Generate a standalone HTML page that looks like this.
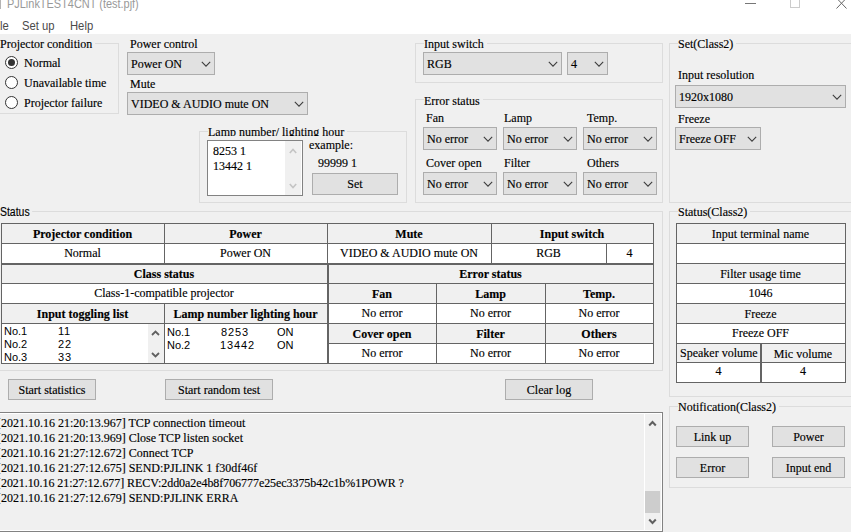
<!DOCTYPE html>
<html><head><meta charset="utf-8"><style>
html,body{margin:0;padding:0}
body{width:851px;height:532px;overflow:hidden;position:relative;background:#f0f0f0;font-family:"Liberation Serif",serif;font-size:12px;color:#000}
body div, body svg{position:absolute;box-sizing:border-box}
.t{white-space:pre;-webkit-text-stroke:0.15px currentColor}
.s{-webkit-text-stroke:0}
</style></head><body>
<div style="left:0px;top:0px;width:851px;height:34px;background:#fff"></div>
<div style="left:0px;top:0px;width:1px;height:9px;background:#b4b4b4"></div>
<div class="t s" style="left:7px;top:-2px;font-family:'Liberation Sans', sans-serif;font-size:12px;line-height:12px;font-weight:normal;color:#999;transform:scaleX(0.912);transform-origin:0 0">PJLinkTEST4CNT (test.pjf)</div>
<div style="left:745px;top:3px;width:11px;height:1px;background:#777"></div>
<div style="left:790px;top:-2px;width:10px;height:10px;border:1px solid #ccc"></div>
<svg style="left:836px;top:0px;overflow:visible" width="11" height="9" viewBox="0 0 11 9"><path d="M0.5,-2 L10.5,8.5 M10.5,-2 L0.5,8.5" stroke="#666" stroke-width="1" fill="none"/></svg>
<div class="t s" style="left:0px;top:20px;font-family:'Liberation Sans', sans-serif;font-size:12.5px;line-height:12.5px;font-weight:normal;color:#4a4a4a;transform:scaleX(0.9);transform-origin:0 0">le</div>
<div class="t s" style="left:22px;top:20px;font-family:'Liberation Sans', sans-serif;font-size:12.5px;line-height:12.5px;font-weight:normal;color:#4a4a4a;transform:scaleX(0.9);transform-origin:0 0">Set up</div>
<div class="t s" style="left:70px;top:20px;font-family:'Liberation Sans', sans-serif;font-size:12.5px;line-height:12.5px;font-weight:normal;color:#4a4a4a;transform:scaleX(0.9);transform-origin:0 0">Help</div>
<div style="left:-5px;top:43px;width:124px;height:71px;border:1px solid #dcdcdc"></div>
<div class="t" style="left:0px;top:38px;font-family:'Liberation Serif', serif;font-size:12px;line-height:12px;background:#f0f0f0;padding-right:3px;height:15px;overflow:hidden">Projector condition</div>
<svg style="left:5px;top:56px" width="13" height="13" viewBox="0 0 13 13"><circle cx="6.5" cy="6.5" r="6" fill="#fff" stroke="#333" stroke-width="1"/><circle cx="6.5" cy="6.5" r="3.5" fill="#333"/></svg>
<svg style="left:5px;top:76px" width="13" height="13" viewBox="0 0 13 13"><circle cx="6.5" cy="6.5" r="6" fill="#fff" stroke="#333" stroke-width="1"/></svg>
<svg style="left:5px;top:96px" width="13" height="13" viewBox="0 0 13 13"><circle cx="6.5" cy="6.5" r="6" fill="#fff" stroke="#333" stroke-width="1"/></svg>
<div class="t" style="left:24px;top:57px;font-family:'Liberation Serif', serif;font-size:12px;line-height:12px;font-weight:normal;color:#000;">Normal</div>
<div class="t" style="left:24px;top:77px;font-family:'Liberation Serif', serif;font-size:12px;line-height:12px;font-weight:normal;color:#000;">Unavailable time</div>
<div class="t" style="left:24px;top:97px;font-family:'Liberation Serif', serif;font-size:12px;line-height:12px;font-weight:normal;color:#000;">Projector failure</div>
<div class="t" style="left:130px;top:38px;font-family:'Liberation Serif', serif;font-size:12px;line-height:12px;font-weight:normal;color:#000;">Power control</div>
<div style="left:127px;top:52px;width:88px;height:23px;background:#e1e1e1;border:1px solid #adadad"></div>
<div class="t" style="left:131px;top:58px;font-family:'Liberation Serif', serif;font-size:12px;line-height:12px;font-weight:normal;color:#000;">Power ON</div>
<svg style="left:201px;top:61px" width="10" height="7"><polyline points="0.8,0.8 5,5.2 9.2,0.8" fill="none" stroke="#3c3c3c" stroke-width="1.05"/></svg>
<div class="t" style="left:130px;top:78px;font-family:'Liberation Serif', serif;font-size:12px;line-height:12px;font-weight:normal;color:#000;">Mute</div>
<div style="left:127px;top:92px;width:181px;height:23px;background:#e1e1e1;border:1px solid #adadad"></div>
<div class="t" style="left:131px;top:98px;font-family:'Liberation Serif', serif;font-size:12px;line-height:12px;font-weight:normal;color:#000;">VIDEO &amp; AUDIO mute ON</div>
<svg style="left:294px;top:101px" width="10" height="7"><polyline points="0.8,0.8 5,5.2 9.2,0.8" fill="none" stroke="#3c3c3c" stroke-width="1.05"/></svg>
<div style="left:199px;top:131px;width:208px;height:72px;border:1px solid #dcdcdc"></div>
<div class="t" style="left:208px;top:126px;font-family:'Liberation Serif', serif;font-size:12px;line-height:12px;background:#f0f0f0;padding-right:3px;height:10px;overflow:hidden">Lamp number/ lighting hour</div>
<div style="left:207px;top:140px;width:96px;height:56px;background:#fff;border:1px solid #828282"></div>
<div style="left:285px;top:141px;width:16px;height:54px;background:#f0f0f0"></div>
<svg style="left:289px;top:183px" width="8" height="6"><polyline points="0.8,1 4,4.5 7.2,1" fill="none" stroke="#c4c4c4" stroke-width="1.6"/></svg>
<svg style="left:289px;top:148px" width="8" height="6"><polyline points="0.8,5 4,1.5 7.2,5" fill="none" stroke="#c4c4c4" stroke-width="1.6"/></svg>
<div class="t" style="left:213px;top:145px;font-family:'Liberation Serif', serif;font-size:12px;line-height:12px;font-weight:normal;color:#000;">8253 1</div>
<div class="t" style="left:213px;top:160px;font-family:'Liberation Serif', serif;font-size:12px;line-height:12px;font-weight:normal;color:#000;">13442 1</div>
<div class="t" style="left:309px;top:139px;font-family:'Liberation Serif', serif;font-size:12px;line-height:12px;font-weight:normal;color:#000;">example:</div>
<div class="t" style="left:318px;top:157px;font-family:'Liberation Serif', serif;font-size:12px;line-height:12px;font-weight:normal;color:#000;">99999 1</div>
<div style="left:312px;top:173px;width:86px;height:22px;background:#e1e1e1;border:1px solid #adadad"></div>
<div class="t" style="left:312px;top:178px;width:86px;text-align:center;font-family:'Liberation Serif', serif;font-size:12px;line-height:12px;font-weight:normal;color:#000;">Set</div>
<div style="left:415px;top:43px;width:248px;height:40px;border:1px solid #dcdcdc"></div>
<div class="t" style="left:424px;top:38px;font-family:'Liberation Serif', serif;font-size:12px;line-height:12px;background:#f0f0f0;padding-right:3px;height:15px;overflow:hidden">Input switch</div>
<div style="left:423px;top:52px;width:139px;height:23px;background:#e1e1e1;border:1px solid #adadad"></div>
<div class="t" style="left:427px;top:58px;font-family:'Liberation Serif', serif;font-size:12px;line-height:12px;font-weight:normal;color:#000;">RGB</div>
<svg style="left:548px;top:61px" width="10" height="7"><polyline points="0.8,0.8 5,5.2 9.2,0.8" fill="none" stroke="#3c3c3c" stroke-width="1.05"/></svg>
<div style="left:567px;top:52px;width:41px;height:23px;background:#e1e1e1;border:1px solid #adadad"></div>
<div class="t" style="left:571px;top:58px;font-family:'Liberation Serif', serif;font-size:12px;line-height:12px;font-weight:normal;color:#000;">4</div>
<svg style="left:594px;top:61px" width="10" height="7"><polyline points="0.8,0.8 5,5.2 9.2,0.8" fill="none" stroke="#3c3c3c" stroke-width="1.05"/></svg>
<div style="left:415px;top:99px;width:248px;height:104px;border:1px solid #dcdcdc"></div>
<div class="t" style="left:424px;top:95px;font-family:'Liberation Serif', serif;font-size:12px;line-height:12px;background:#f0f0f0;padding-right:3px;height:15px;overflow:hidden">Error status</div>
<div class="t" style="left:426px;top:112px;font-family:'Liberation Serif', serif;font-size:12px;line-height:12px;font-weight:normal;color:#000;">Fan</div>
<div style="left:423px;top:127px;width:74px;height:23px;background:#e1e1e1;border:1px solid #adadad"></div>
<div class="t" style="left:427px;top:133px;font-family:'Liberation Serif', serif;font-size:12px;line-height:12px;font-weight:normal;color:#000;">No error</div>
<svg style="left:483px;top:136px" width="10" height="7"><polyline points="0.8,0.8 5,5.2 9.2,0.8" fill="none" stroke="#3c3c3c" stroke-width="1.05"/></svg>
<div class="t" style="left:504px;top:112px;font-family:'Liberation Serif', serif;font-size:12px;line-height:12px;font-weight:normal;color:#000;">Lamp</div>
<div style="left:503px;top:127px;width:74px;height:23px;background:#e1e1e1;border:1px solid #adadad"></div>
<div class="t" style="left:507px;top:133px;font-family:'Liberation Serif', serif;font-size:12px;line-height:12px;font-weight:normal;color:#000;">No error</div>
<svg style="left:563px;top:136px" width="10" height="7"><polyline points="0.8,0.8 5,5.2 9.2,0.8" fill="none" stroke="#3c3c3c" stroke-width="1.05"/></svg>
<div class="t" style="left:587px;top:112px;font-family:'Liberation Serif', serif;font-size:12px;line-height:12px;font-weight:normal;color:#000;">Temp.</div>
<div style="left:583px;top:127px;width:74px;height:23px;background:#e1e1e1;border:1px solid #adadad"></div>
<div class="t" style="left:587px;top:133px;font-family:'Liberation Serif', serif;font-size:12px;line-height:12px;font-weight:normal;color:#000;">No error</div>
<svg style="left:643px;top:136px" width="10" height="7"><polyline points="0.8,0.8 5,5.2 9.2,0.8" fill="none" stroke="#3c3c3c" stroke-width="1.05"/></svg>
<div class="t" style="left:426px;top:157px;font-family:'Liberation Serif', serif;font-size:12px;line-height:12px;font-weight:normal;color:#000;">Cover open</div>
<div style="left:423px;top:172px;width:74px;height:23px;background:#e1e1e1;border:1px solid #adadad"></div>
<div class="t" style="left:427px;top:178px;font-family:'Liberation Serif', serif;font-size:12px;line-height:12px;font-weight:normal;color:#000;">No error</div>
<svg style="left:483px;top:181px" width="10" height="7"><polyline points="0.8,0.8 5,5.2 9.2,0.8" fill="none" stroke="#3c3c3c" stroke-width="1.05"/></svg>
<div class="t" style="left:504px;top:157px;font-family:'Liberation Serif', serif;font-size:12px;line-height:12px;font-weight:normal;color:#000;">Filter</div>
<div style="left:503px;top:172px;width:74px;height:23px;background:#e1e1e1;border:1px solid #adadad"></div>
<div class="t" style="left:507px;top:178px;font-family:'Liberation Serif', serif;font-size:12px;line-height:12px;font-weight:normal;color:#000;">No error</div>
<svg style="left:563px;top:181px" width="10" height="7"><polyline points="0.8,0.8 5,5.2 9.2,0.8" fill="none" stroke="#3c3c3c" stroke-width="1.05"/></svg>
<div class="t" style="left:587px;top:157px;font-family:'Liberation Serif', serif;font-size:12px;line-height:12px;font-weight:normal;color:#000;">Others</div>
<div style="left:583px;top:172px;width:74px;height:23px;background:#e1e1e1;border:1px solid #adadad"></div>
<div class="t" style="left:587px;top:178px;font-family:'Liberation Serif', serif;font-size:12px;line-height:12px;font-weight:normal;color:#000;">No error</div>
<svg style="left:643px;top:181px" width="10" height="7"><polyline points="0.8,0.8 5,5.2 9.2,0.8" fill="none" stroke="#3c3c3c" stroke-width="1.05"/></svg>
<div style="left:669px;top:43px;width:192px;height:160px;border:1px solid #dcdcdc"></div>
<div class="t" style="left:678px;top:38px;font-family:'Liberation Serif', serif;font-size:12px;line-height:12px;background:#f0f0f0;padding-right:3px;height:15px;overflow:hidden">Set(Class2)</div>
<div class="t" style="left:678px;top:69px;font-family:'Liberation Serif', serif;font-size:12px;line-height:12px;font-weight:normal;color:#000;">Input resolution</div>
<div style="left:675px;top:85px;width:171px;height:23px;background:#e1e1e1;border:1px solid #adadad"></div>
<div class="t" style="left:679px;top:91px;font-family:'Liberation Serif', serif;font-size:12px;line-height:12px;font-weight:normal;color:#000;">1920x1080</div>
<svg style="left:832px;top:94px" width="10" height="7"><polyline points="0.8,0.8 5,5.2 9.2,0.8" fill="none" stroke="#3c3c3c" stroke-width="1.05"/></svg>
<div class="t" style="left:678px;top:113px;font-family:'Liberation Serif', serif;font-size:12px;line-height:12px;font-weight:normal;color:#000;">Freeze</div>
<div style="left:675px;top:127px;width:86px;height:23px;background:#e1e1e1;border:1px solid #adadad"></div>
<div class="t" style="left:679px;top:133px;font-family:'Liberation Serif', serif;font-size:12px;line-height:12px;font-weight:normal;color:#000;">Freeze OFF</div>
<svg style="left:747px;top:136px" width="10" height="7"><polyline points="0.8,0.8 5,5.2 9.2,0.8" fill="none" stroke="#3c3c3c" stroke-width="1.05"/></svg>
<div style="left:-5px;top:211px;width:668px;height:160px;border:1px solid #dcdcdc"></div>
<div class="t" style="left:0px;top:206px;font-family:'Liberation Sans', sans-serif;font-size:12px;line-height:12px;background:#f0f0f0;padding-right:3px;height:13px;transform:scaleX(0.87);transform-origin:0 0">Status</div>
<div style="left:1px;top:223px;width:164px;height:21px;background:#f0f0f0;border:1px solid #646464"></div>
<div style="left:164px;top:223px;width:164px;height:21px;background:#f0f0f0;border:1px solid #646464"></div>
<div style="left:327px;top:223px;width:165px;height:21px;background:#f0f0f0;border:1px solid #646464"></div>
<div style="left:491px;top:223px;width:163px;height:21px;background:#f0f0f0;border:1px solid #646464"></div>
<div style="left:1px;top:243px;width:164px;height:21px;background:#fff;border:1px solid #646464"></div>
<div style="left:164px;top:243px;width:164px;height:21px;background:#fff;border:1px solid #646464"></div>
<div style="left:327px;top:243px;width:165px;height:21px;background:#fff;border:1px solid #646464"></div>
<div style="left:491px;top:243px;width:116px;height:21px;background:#fff;border:1px solid #646464"></div>
<div style="left:606px;top:243px;width:48px;height:21px;background:#fff;border:1px solid #646464"></div>
<div class="t" style="left:1px;top:228px;width:163px;text-align:center;font-family:'Liberation Serif', serif;font-size:12px;line-height:12px;font-weight:bold;color:#000;">Projector condition</div>
<div class="t" style="left:164px;top:228px;width:163px;text-align:center;font-family:'Liberation Serif', serif;font-size:12px;line-height:12px;font-weight:bold;color:#000;">Power</div>
<div class="t" style="left:327px;top:228px;width:164px;text-align:center;font-family:'Liberation Serif', serif;font-size:12px;line-height:12px;font-weight:bold;color:#000;">Mute</div>
<div class="t" style="left:491px;top:228px;width:162px;text-align:center;font-family:'Liberation Serif', serif;font-size:12px;line-height:12px;font-weight:bold;color:#000;">Input switch</div>
<div class="t" style="left:1px;top:247px;width:163px;text-align:center;font-family:'Liberation Serif', serif;font-size:12px;line-height:12px;font-weight:normal;color:#000;">Normal</div>
<div class="t" style="left:164px;top:247px;width:163px;text-align:center;font-family:'Liberation Serif', serif;font-size:12px;line-height:12px;font-weight:normal;color:#000;">Power ON</div>
<div class="t" style="left:327px;top:247px;width:164px;text-align:center;font-family:'Liberation Serif', serif;font-size:12px;line-height:12px;font-weight:normal;color:#000;">VIDEO &amp; AUDIO mute ON</div>
<div class="t" style="left:491px;top:247px;width:115px;text-align:center;font-family:'Liberation Serif', serif;font-size:12px;line-height:12px;font-weight:normal;color:#000;">RGB</div>
<div class="t" style="left:606px;top:247px;width:47px;text-align:center;font-family:'Liberation Serif', serif;font-size:12px;line-height:12px;font-weight:normal;color:#000;">4</div>
<div style="left:1px;top:264px;width:327px;height:20px;background:#f0f0f0;border:1px solid #646464"></div>
<div class="t" style="left:1px;top:268px;width:326px;text-align:center;font-family:'Liberation Serif', serif;font-size:12px;line-height:12px;font-weight:bold;color:#000;">Class status</div>
<div style="left:1px;top:283px;width:327px;height:21px;background:#fff;border:1px solid #646464"></div>
<div class="t" style="left:1px;top:287px;width:326px;text-align:center;font-family:'Liberation Serif', serif;font-size:12px;line-height:12px;font-weight:normal;color:#000;">Class-1-compatible projector</div>
<div style="left:1px;top:303px;width:164px;height:21px;background:#f0f0f0;border:1px solid #646464"></div>
<div style="left:164px;top:303px;width:164px;height:21px;background:#f0f0f0;border:1px solid #646464"></div>
<div class="t" style="left:1px;top:308px;width:163px;text-align:center;font-family:'Liberation Serif', serif;font-size:12px;line-height:12px;font-weight:bold;color:#000;">Input toggling list</div>
<div class="t" style="left:164px;top:308px;width:163px;text-align:center;font-family:'Liberation Serif', serif;font-size:12px;line-height:12px;font-weight:bold;color:#000;">Lamp number lighting hour</div>
<div style="left:1px;top:323px;width:164px;height:41px;background:#fff;border:1px solid #646464"></div>
<div style="left:164px;top:323px;width:164px;height:41px;background:#fff;border:1px solid #646464"></div>
<div style="left:2px;top:324px;width:162px;height:39px;overflow:hidden">
<div class="t s" style="left:2px;top:2px;font-family:'Liberation Sans', sans-serif;font-size:11px;line-height:11px">No.1</div>
<div class="t s" style="left:56px;top:2px;font-family:'Liberation Sans', sans-serif;font-size:11px;line-height:11px;letter-spacing:0.8px">11</div>
<div class="t s" style="left:2px;top:15px;font-family:'Liberation Sans', sans-serif;font-size:11px;line-height:11px">No.2</div>
<div class="t s" style="left:56px;top:15px;font-family:'Liberation Sans', sans-serif;font-size:11px;line-height:11px;letter-spacing:0.8px">22</div>
<div class="t s" style="left:2px;top:28px;font-family:'Liberation Sans', sans-serif;font-size:11px;line-height:11px">No.3</div>
<div class="t s" style="left:56px;top:28px;font-family:'Liberation Sans', sans-serif;font-size:11px;line-height:11px;letter-spacing:0.8px">33</div>
</div>
<div style="left:148px;top:324px;width:16px;height:39px;background:#f0f0f0"></div>
<svg style="left:151px;top:330px" width="9" height="6"><polyline points="1,5 4.5,1.5 8,5" fill="none" stroke="#606060" stroke-width="1.8"/></svg>
<svg style="left:151px;top:352px" width="9" height="6"><polyline points="1,1 4.5,4.5 8,1" fill="none" stroke="#606060" stroke-width="1.8"/></svg>
<div class="t s" style="left:167px;top:327px;font-family:'Liberation Sans', sans-serif;font-size:11px;line-height:11px;font-weight:normal;color:#000;">No.1</div>
<div class="t s" style="left:221px;top:327px;font-family:'Liberation Sans', sans-serif;font-size:11px;line-height:11px;font-weight:normal;color:#000;letter-spacing:0.9px">8253</div>
<div class="t s" style="left:277px;top:327px;font-family:'Liberation Sans', sans-serif;font-size:11px;line-height:11px;font-weight:normal;color:#000;">ON</div>
<div class="t s" style="left:167px;top:340px;font-family:'Liberation Sans', sans-serif;font-size:11px;line-height:11px;font-weight:normal;color:#000;">No.2</div>
<div class="t s" style="left:220px;top:340px;font-family:'Liberation Sans', sans-serif;font-size:11px;line-height:11px;font-weight:normal;color:#000;letter-spacing:0.9px">13442</div>
<div class="t s" style="left:277px;top:340px;font-family:'Liberation Sans', sans-serif;font-size:11px;line-height:11px;font-weight:normal;color:#000;">ON</div>
<div style="left:328px;top:264px;width:326px;height:20px;background:#f0f0f0;border:1px solid #646464"></div>
<div class="t" style="left:328px;top:268px;width:325px;text-align:center;font-family:'Liberation Serif', serif;font-size:12px;line-height:12px;font-weight:bold;color:#000;">Error status</div>
<div style="left:328px;top:283px;width:109px;height:21px;background:#f0f0f0;border:1px solid #646464"></div>
<div style="left:328px;top:303px;width:109px;height:21px;background:#fff;border:1px solid #646464"></div>
<div style="left:328px;top:323px;width:109px;height:21px;background:#f0f0f0;border:1px solid #646464"></div>
<div style="left:328px;top:343px;width:109px;height:21px;background:#fff;border:1px solid #646464"></div>
<div style="left:436px;top:283px;width:110px;height:21px;background:#f0f0f0;border:1px solid #646464"></div>
<div style="left:436px;top:303px;width:110px;height:21px;background:#fff;border:1px solid #646464"></div>
<div style="left:436px;top:323px;width:110px;height:21px;background:#f0f0f0;border:1px solid #646464"></div>
<div style="left:436px;top:343px;width:110px;height:21px;background:#fff;border:1px solid #646464"></div>
<div style="left:545px;top:283px;width:109px;height:21px;background:#f0f0f0;border:1px solid #646464"></div>
<div style="left:545px;top:303px;width:109px;height:21px;background:#fff;border:1px solid #646464"></div>
<div style="left:545px;top:323px;width:109px;height:21px;background:#f0f0f0;border:1px solid #646464"></div>
<div style="left:545px;top:343px;width:109px;height:21px;background:#fff;border:1px solid #646464"></div>
<div class="t" style="left:328px;top:288px;width:108px;text-align:center;font-family:'Liberation Serif', serif;font-size:12px;line-height:12px;font-weight:bold;color:#000;">Fan</div>
<div class="t" style="left:328px;top:307px;width:108px;text-align:center;font-family:'Liberation Serif', serif;font-size:12px;line-height:12px;font-weight:normal;color:#000;">No error</div>
<div class="t" style="left:436px;top:288px;width:109px;text-align:center;font-family:'Liberation Serif', serif;font-size:12px;line-height:12px;font-weight:bold;color:#000;">Lamp</div>
<div class="t" style="left:436px;top:307px;width:109px;text-align:center;font-family:'Liberation Serif', serif;font-size:12px;line-height:12px;font-weight:normal;color:#000;">No error</div>
<div class="t" style="left:545px;top:288px;width:108px;text-align:center;font-family:'Liberation Serif', serif;font-size:12px;line-height:12px;font-weight:bold;color:#000;">Temp.</div>
<div class="t" style="left:545px;top:307px;width:108px;text-align:center;font-family:'Liberation Serif', serif;font-size:12px;line-height:12px;font-weight:normal;color:#000;">No error</div>
<div class="t" style="left:328px;top:328px;width:108px;text-align:center;font-family:'Liberation Serif', serif;font-size:12px;line-height:12px;font-weight:bold;color:#000;">Cover open</div>
<div class="t" style="left:328px;top:347px;width:108px;text-align:center;font-family:'Liberation Serif', serif;font-size:12px;line-height:12px;font-weight:normal;color:#000;">No error</div>
<div class="t" style="left:436px;top:328px;width:109px;text-align:center;font-family:'Liberation Serif', serif;font-size:12px;line-height:12px;font-weight:bold;color:#000;">Filter</div>
<div class="t" style="left:436px;top:347px;width:109px;text-align:center;font-family:'Liberation Serif', serif;font-size:12px;line-height:12px;font-weight:normal;color:#000;">No error</div>
<div class="t" style="left:545px;top:328px;width:108px;text-align:center;font-family:'Liberation Serif', serif;font-size:12px;line-height:12px;font-weight:bold;color:#000;">Others</div>
<div class="t" style="left:545px;top:347px;width:108px;text-align:center;font-family:'Liberation Serif', serif;font-size:12px;line-height:12px;font-weight:normal;color:#000;">No error</div>
<div style="left:669px;top:211px;width:192px;height:186px;border:1px solid #dcdcdc"></div>
<div class="t" style="left:678px;top:206px;font-family:'Liberation Serif', serif;font-size:12px;line-height:12px;background:#f0f0f0;padding-right:3px;height:15px;overflow:hidden">Status(Class2)</div>
<div style="left:676px;top:223px;width:170px;height:21px;background:#f0f0f0;border:1px solid #646464"></div>
<div class="t" style="left:676px;top:228px;width:169px;text-align:center;font-family:'Liberation Serif', serif;font-size:12px;line-height:12px;font-weight:normal;color:#000;">Input terminal name</div>
<div style="left:676px;top:243px;width:170px;height:21px;background:#fff;border:1px solid #646464"></div>
<div style="left:676px;top:263px;width:170px;height:21px;background:#f0f0f0;border:1px solid #646464"></div>
<div class="t" style="left:676px;top:268px;width:169px;text-align:center;font-family:'Liberation Serif', serif;font-size:12px;line-height:12px;font-weight:normal;color:#000;">Filter usage time</div>
<div style="left:676px;top:283px;width:170px;height:21px;background:#fff;border:1px solid #646464"></div>
<div class="t" style="left:676px;top:287px;width:169px;text-align:center;font-family:'Liberation Serif', serif;font-size:12px;line-height:12px;font-weight:normal;color:#000;">1046</div>
<div style="left:676px;top:303px;width:170px;height:21px;background:#f0f0f0;border:1px solid #646464"></div>
<div class="t" style="left:676px;top:308px;width:169px;text-align:center;font-family:'Liberation Serif', serif;font-size:12px;line-height:12px;font-weight:normal;color:#000;">Freeze</div>
<div style="left:676px;top:323px;width:170px;height:21px;background:#fff;border:1px solid #646464"></div>
<div class="t" style="left:676px;top:327px;width:169px;text-align:center;font-family:'Liberation Serif', serif;font-size:12px;line-height:12px;font-weight:normal;color:#000;">Freeze OFF</div>
<div style="left:676px;top:343px;width:85px;height:20px;background:#f0f0f0;border:1px solid #646464"></div>
<div style="left:761px;top:343px;width:85px;height:20px;background:#f0f0f0;border:1px solid #646464"></div>
<div class="t" style="left:680px;top:347px;font-family:'Liberation Serif', serif;font-size:12px;line-height:12px;font-weight:normal;color:#000;">Speaker volume</div>
<div class="t" style="left:761px;top:348px;width:84px;text-align:center;font-family:'Liberation Serif', serif;font-size:12px;line-height:12px;font-weight:normal;color:#000;">Mic volume</div>
<div style="left:676px;top:362px;width:85px;height:21px;background:#fff;border:1px solid #646464"></div>
<div style="left:761px;top:362px;width:85px;height:21px;background:#fff;border:1px solid #646464"></div>
<div class="t" style="left:676px;top:365px;width:85px;text-align:center;font-family:'Liberation Serif', serif;font-size:12px;line-height:12px;font-weight:normal;color:#000;">4</div>
<div class="t" style="left:761px;top:365px;width:84px;text-align:center;font-family:'Liberation Serif', serif;font-size:12px;line-height:12px;font-weight:normal;color:#000;">4</div>
<div style="left:8px;top:379px;width:88px;height:21px;background:#e1e1e1;border:1px solid #adadad"></div>
<div class="t" style="left:8px;top:384px;width:88px;text-align:center;font-family:'Liberation Serif', serif;font-size:12px;line-height:12px;font-weight:normal;color:#000;">Start statistics</div>
<div style="left:165px;top:379px;width:108px;height:21px;background:#e1e1e1;border:1px solid #adadad"></div>
<div class="t" style="left:165px;top:384px;width:108px;text-align:center;font-family:'Liberation Serif', serif;font-size:12px;line-height:12px;font-weight:normal;color:#000;">Start random test</div>
<div style="left:505px;top:379px;width:88px;height:21px;background:#e1e1e1;border:1px solid #adadad"></div>
<div class="t" style="left:505px;top:384px;width:88px;text-align:center;font-family:'Liberation Serif', serif;font-size:12px;line-height:12px;font-weight:normal;color:#000;">Clear log</div>
<div style="left:-1px;top:412px;width:664px;height:120px;background:#f0f0f0;border:1px solid #828282"></div>
<div style="left:0px;top:413px;width:662px;height:118px;border:1px solid #fff;border-left:0"></div>
<div class="t" style="left:-3px;top:417px;font-family:'Liberation Serif', serif;font-size:12px;line-height:12px;font-weight:normal;color:#000;">[2021.10.16 21:20:13.967] TCP connection timeout</div>
<div class="t" style="left:-3px;top:432px;font-family:'Liberation Serif', serif;font-size:12px;line-height:12px;font-weight:normal;color:#000;">[2021.10.16 21:20:13.969] Close TCP listen socket</div>
<div class="t" style="left:-3px;top:447px;font-family:'Liberation Serif', serif;font-size:12px;line-height:12px;font-weight:normal;color:#000;">[2021.10.16 21:27:12.672] Connect TCP</div>
<div class="t" style="left:-3px;top:462px;font-family:'Liberation Serif', serif;font-size:12px;line-height:12px;font-weight:normal;color:#000;">[2021.10.16 21:27:12.675] SEND:PJLINK 1 f30df46f</div>
<div class="t" style="left:-3px;top:477px;font-family:'Liberation Serif', serif;font-size:12px;line-height:12px;font-weight:normal;color:#000;letter-spacing:-0.06px">[2021.10.16 21:27:12.677] RECV:2dd0a2e4b8f706777e25ec3375b42c1b%1POWR ?</div>
<div class="t" style="left:-3px;top:492px;font-family:'Liberation Serif', serif;font-size:12px;line-height:12px;font-weight:normal;color:#000;">[2021.10.16 21:27:12.679] SEND:PJLINK ERRA</div>
<div style="left:644px;top:413px;width:1px;height:117px;background:#fff"></div>
<div style="left:645px;top:414px;width:16px;height:116px;background:#f0f0f0"></div>
<svg style="left:648px;top:419px" width="9" height="8"><polyline points="1.2,6.5 4.5,3 7.8,6.5" fill="none" stroke="#606060" stroke-width="2"/></svg>
<svg style="left:648px;top:518px" width="9" height="8"><polyline points="1.2,1.5 4.5,5 7.8,1.5" fill="none" stroke="#606060" stroke-width="2"/></svg>
<div style="left:645px;top:491px;width:15px;height:22px;background:#cdcdcd"></div>
<div style="left:669px;top:406px;width:192px;height:82px;border:1px solid #dcdcdc"></div>
<div class="t" style="left:678px;top:401px;font-family:'Liberation Serif', serif;font-size:12px;line-height:12px;background:#f0f0f0;padding-right:3px;height:15px;overflow:hidden">Notification(Class2)</div>
<div style="left:676px;top:426px;width:73px;height:21px;background:#e1e1e1;border:1px solid #adadad"></div>
<div class="t" style="left:676px;top:431px;width:73px;text-align:center;font-family:'Liberation Serif', serif;font-size:12px;line-height:12px;font-weight:normal;color:#000;">Link up</div>
<div style="left:772px;top:426px;width:73px;height:21px;background:#e1e1e1;border:1px solid #adadad"></div>
<div class="t" style="left:772px;top:431px;width:73px;text-align:center;font-family:'Liberation Serif', serif;font-size:12px;line-height:12px;font-weight:normal;color:#000;">Power</div>
<div style="left:676px;top:457px;width:73px;height:21px;background:#e1e1e1;border:1px solid #adadad"></div>
<div class="t" style="left:676px;top:462px;width:73px;text-align:center;font-family:'Liberation Serif', serif;font-size:12px;line-height:12px;font-weight:normal;color:#000;">Error</div>
<div style="left:772px;top:457px;width:73px;height:21px;background:#e1e1e1;border:1px solid #adadad"></div>
<div class="t" style="left:772px;top:462px;width:73px;text-align:center;font-family:'Liberation Serif', serif;font-size:12px;line-height:12px;font-weight:normal;color:#000;">Input end</div>
</body></html>
